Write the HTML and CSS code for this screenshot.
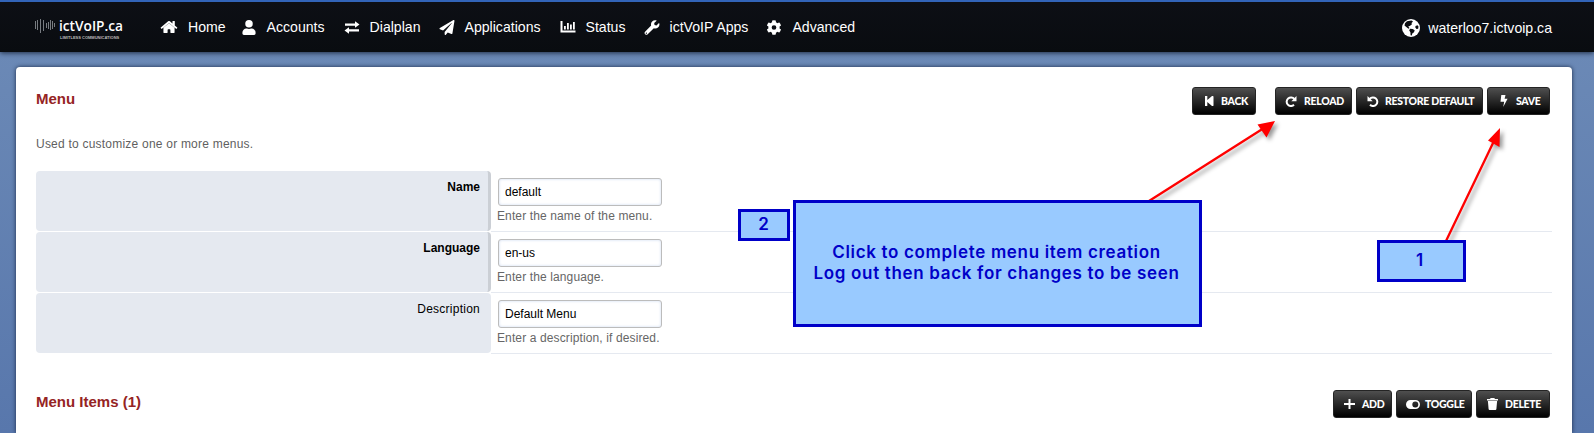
FILE: index.html
```html
<!DOCTYPE html>
<html lang="en">
<head>
<meta charset="utf-8">
<title>Menu</title>
<link rel="stylesheet" href="styles.css">
</head>
<body>
<header class="topbar">
  <div class="logo">
    <svg class="wave" width="20" height="16" viewBox="0 0 20 16" stroke="#777b80" stroke-width="1"><path d="M.5 4v8M2.500 3v10M5.500 2v14M8.500 3v11M11.500 6v5M13.500 5v7M15.500 3v10M17.500 4v8M19.500 6v4"/></svg>
    <div class="brand"><span class="name">ictVoIP.ca</span><span class="tag">LIMITLESS COMMUNICATIONS</span></div>
  </div>
  <nav class="nav">
    <a class="item home"><svg width="16" height="13" viewBox="0 0 576 448"><path d="M280 84 96 235v165q0 16 16 16h112q16 0 16-16v-96q0-16 16-16h64q16 0 16 16v96q0 16 16 16h112q16 0 16-16V235L296 84q-8-6-16 0zM571 220 488 151V12q0-12-12-12h-56q-12 0-12 12v73L318 11q-30-24-60 0L4 220q-9 8-2 17l26 31q8 9 17 2L280 76q8-6 16 0l235 194q9 7 17-2l25-31q7-9-2-17z"/></svg>Home</a>
    <a class="item accounts"><svg width="13" height="15" viewBox="0 0 448 512"><path d="M224 256a128 128 0 1 0 0-256 128 128 0 0 0 0 256zm90 32h-17c-46 21-100 21-146 0h-17C60 288 0 348 0 422v42c0 26 21 48 48 48h352c27 0 48-22 48-48v-42c0-74-60-134-134-134z"/></svg>Accounts</a>
    <a class="item dialplan"><svg width="15" height="13" viewBox="0 0 15 13"><path d="M.5 2.500h10V.3L15 3.600l-4.500 3.200V4.700H.5zM14.500 8.300h-10V6.200L0 9.400l4.500 3.300v-2.200h10z"/></svg>Dialplan</a>
    <a class="item"><svg width="15" height="15" viewBox="0 0 512 512"><path d="M476 3 12 271c-18 10-15 35 2 43l107 44L409 105c5-5 13 2 8 8L176 407v81c0 23 28 33 42 16l63-78 125 53c15 6 31-3 34-18l72-432c3-20-18-35-36-26z"/></svg>Applications</a>
    <a class="item status"><svg width="15" height="12" viewBox="0 0 15 12"><path d="M0 0h2v9.500h13v2H0zM3.500 5h1.800v3.500H3.500zM6.500 2h1.800v6.500H6.500zM9.500 3.500h1.800v5H9.500zM12.500 1h1.800v7.500h-1.800z"/></svg>Status</a>
    <a class="item"><svg width="15" height="15" viewBox="0 0 512 512"><path d="M507 117c-2-10-15-13-22-6l-75 75-68-12-11-68 75-74c7-7 4-20-6-22A144 144 0 0 0 227 190L19 399a64 64 0 0 0 90 90l209-208a144 144 0 0 0 189-164zM64 472a24 24 0 1 1 0-48 24 24 0 0 1 0 48z"/></svg>ictVoIP Apps</a>
    <a class="item"><svg width="15" height="15" viewBox="0 0 512 512"><path fill-rule="evenodd" d="m487 316-42-25c4-23 4-47 0-70l42-25q8-5 5-14a250 250 0 0 0-55-95q-6-7-14-2l-43 24a186 186 0 0 0-60-35V25q0-10-10-12a256 256 0 0 0-110 0q-10 2-10 12v49a186 186 0 0 0-60 35L87 85q-8-5-14 2a250 250 0 0 0-55 95q-3 9 5 14l42 25c-4 23-4 47 0 70l-42 25q-8 5-5 14a250 250 0 0 0 55 95q6 7 14 2l43-24a186 186 0 0 0 60 35v49q0 10 10 12a256 256 0 0 0 110 0q10-2 10-12v-49a186 186 0 0 0 60-35l43 24q8 5 14-2a250 250 0 0 0 55-95q3-9-5-14zM256 336a80 80 0 1 1 0-160 80 80 0 0 1 0 160z"/></svg>Advanced</a>
  </nav>
  <div class="domain"><svg width="18" height="18" viewBox="0 0 18 18"><circle cx="9" cy="9" r="9"/><path fill="#0b0d11" d="M5 2.200 9.500 1.500l1.500 1L9.600 4l.2 1.400L7.700 7 6.200 7.500 7.500 9 6.500 9.700 4.300 8 2.500 6.500 3 4.300zM8 9.800l2.700.2 2 1.300-.7 2-1.700 1.300-.5 2-1.200-.4-.2-3-1.200-1.600zM13.500 7l2-.8 1 1.300-.3 2.200-1.700.3-1.200-1.500z"/></svg>waterloo7.ictvoip.ca</div>
</header>
<main class="card">
  <div class="bar">
    <h1>Menu</h1>
    <div class="actions">
      <button class="btn back"><svg width="9" height="10" viewBox="0 0 9 10"><path d="M0 0h2.300v4L7 0q1.500-.5 1.500 1v8q0 1.500-1.500 1L2.300 6v4H0z"/></svg>BACK</button>
      <button class="btn reload"><svg width="12" height="11" viewBox="0 0 12 11"><path fill="none" stroke="#fff" stroke-width="2" d="M9.300 3A4.300 4.300 0 1 0 9 8.800"/><path d="M11.500 0v5.200H6.300z"/></svg>RELOAD</button>
      <button class="btn restore"><svg width="12" height="11" viewBox="0 0 12 11"><path fill="none" stroke="#fff" stroke-width="2" d="M2.700 3A4.300 4.300 0 1 1 3 8.800"/><path d="M.5 0v5.200h5.200z"/></svg>RESTORE DEFAULT</button>
      <button class="btn save"><svg width="8" height="12" viewBox="0 0 8 12"><path d="M1.300 0h4.200L4.600 3.700h3L3.200 12l1-5.300H.5z"/></svg>SAVE</button>
    </div>
  </div>
  <p class="intro">Used to customize one or more menus.</p>
  <div class="form">
    <label class="label required">Name</label>
    <div class="field"><input class="input" value="default"><span class="help">Enter the name of the menu.</span></div>
    <label class="label required">Language</label>
    <div class="field"><input class="input" value="en-us"><span class="help">Enter the language.</span></div>
    <label class="label optional">Description</label>
    <div class="field"><input class="input" value="Default Menu"><span class="help">Enter a description, if desired.</span></div>
  </div>
  <div class="bar items">
    <h2>Menu Items (1)</h2>
    <div class="actions">
      <button class="btn add"><svg width="11" height="10" viewBox="0 0 11 10"><path d="M4.500 0h2v4H11v2H6.500v4h-2V6H0V4h4.500z"/></svg>ADD</button>
      <button class="btn toggle"><svg width="14" height="9" viewBox="0 0 14 9"><path fill-rule="evenodd" d="M4.500 0h5a4.500 4.500 0 0 1 0 9h-5a4.500 4.500 0 0 1 0-9zM9.300 1.500a3 3 0 1 0 0 6 3 3 0 0 0 0-6z"/></svg>TOGGLE</button>
      <button class="btn delete"><svg width="11" height="12" viewBox="0 0 11 12"><path d="M0 .9h3L3.700 0h3.600L8 .9h3v1.500H0zM.9 3h9.200l-.7 8q-.1 1-1 1H2.600q-.9 0-1-1z"/></svg>DELETE</button>
    </div>
  </div>
</main>
<svg class="arrows" width="1594" height="433" viewBox="0 0 1594 433">
  <g fill="#f00" stroke="#f00">
    <path stroke-width="2.300" d="M1149 201 1264 128M1446 241 1494 141"/>
    <path stroke="none" d="M1275 121 1257.500 124.500 1266.500 137.500zM1500 128 1488 140.500 1499.500 147z"/>
  </g>
</svg>
<div class="note note-two">2</div>
<div class="note note-main"><span>Click to complete menu item creation</span><span>Log out then back for changes to be seen</span></div>
<div class="note note-one">1</div>
</body>
</html>
```
FILE: styles.css
```css
* { box-sizing: border-box; }
body {
  margin: 0;
  height: 433px;
  overflow: hidden;
  position: relative;
  display: flex;
  flex-direction: column;
  background: linear-gradient(#6b89b6 50px, #5877ac 433px);
  font: 12px "Liberation Sans", Arial, sans-serif;
}
svg { fill: #fff; flex: none; }
.topbar {
  height: 52px;
  flex: none;
  border-top: 2px solid #3264b8;
  background: linear-gradient(#0d0f15, #090c10);
  box-shadow: 0 1px 5px #1e2b42;
  display: flex;
  align-items: flex-start;
  color: #fff;
  font-size: 14.1px;
}
.logo { display: flex; width: 125px; margin-left: 35px; padding-top: 15px; gap: 4px; }
.brand { display: flex; flex-direction: column; white-space: nowrap; }
.name { font: 600 13.700px/17px "Open Sans", sans-serif; }
.tag { font: bold 4px/5px "Liberation Sans", Arial, sans-serif; margin: 1px 0 0 1px; color: #bbb; }
.nav { display: flex; gap: 17px; }
.item { display: flex; align-items: center; height: 50px; gap: 9px; white-space: nowrap; }
.item svg { width: 18px; }
.home { gap: 10px; }
.accounts { margin-left: -3px; }
.dialplan, .status { margin-left: 1px; }
.domain { display: flex; align-items: center; gap: 8px; height: 51px; margin: 0 42px 0 auto; }
.card {
  flex: 1;
  min-height: 0;
  margin: 15px 22px 0 16px;
  padding: 20px 20px 0;
  border-radius: 4px 4px 0 0;
  background: #fff;
  box-shadow: 0 0 4px #1b2b49;
}
.bar { display: flex; justify-content: space-between; height: 28px; padding-right: 2px; }
h1, h2 { margin: 0; font-size: 15px; line-height: 24px; color: #952424; }
.actions { display: flex; gap: 4px; }
.btn {
  height: 28px;
  border: 1px solid #242424;
  border-radius: 3px;
  padding: 0 0 0 12px;
  background: linear-gradient(#4f4f4f, #000);
  color: #fff;
  font: 900 10.500px Lato, sans-serif;
  letter-spacing: -.3px;
  display: flex;
  align-items: center;
  gap: 8px;
  white-space: nowrap;
}
.back { width: 64px; margin-right: 15px; gap: 7px; }
.reload { width: 77px; padding-left: 9px; gap: 7px; }
.restore { width: 127px; padding-left: 10px; gap: 6px; }
.save { width: 63px; gap: 8px; }
.add { width: 59px; padding-left: 10px; gap: 7px; }
.toggle { width: 76px; padding-left: 9px; gap: 5px; }
.delete { width: 74px; padding-left: 10px; gap: 7px; }
.intro { margin: 22px 0 19px; line-height: 15px; color: #5f5f5f; letter-spacing: .22px; }
.form { display: grid; grid-template-columns: 455px 1fr; grid-auto-rows: 61px; }
.label {
  height: 60px;
  border-radius: 4px;
  padding: 8px 11px 0 0;
  background: #e5e9f0;
  text-align: right;
  line-height: 16px;
}
.required { border-right: 3px solid #cbcfd5; padding-right: 8px; font-weight: bold; }
.optional { letter-spacing: .25px; }
.field { border-bottom: 1px solid #e5e9f0; padding: 7px 6px 0; display: flex; flex-direction: column; align-items: flex-start; }
.input {
  width: 164px;
  height: 28px;
  margin-left: 1px;
  border: 1px solid #bcbcbc;
  border-radius: 3px;
  padding: 0 6px;
  box-shadow: inset 0 0 3px #cddaf0;
  font: 12px "Liberation Sans", Arial, sans-serif;
  color: #000;
}
.help { line-height: 14px; margin-top: 3px; color: #666; letter-spacing: .12px; }
.items { margin-top: 36px; height: 27px; }
.arrows { position: absolute; left: 0; top: 0; filter: drop-shadow(3px 3px 2px rgba(0,0,0,.4)); }
.note {
  position: absolute;
  border: 3px solid #0000c8;
  background: #99caff;
  color: #0000c8;
  font: 600 17px/21px Inter, sans-serif;
  letter-spacing: .67px;
  display: flex;
  flex-direction: column;
  align-items: center;
  white-space: nowrap;
}
.note-main { left: 793px; top: 200px; width: 409px; height: 127px; padding: 39px 2px 0 0; }
.note-two { left: 738px; top: 209px; width: 52px; height: 32px; padding-top: 2px; }
.note-one { left: 1377px; top: 240px; width: 89px; height: 42px; padding: 7px 3px 0 0; }
```
